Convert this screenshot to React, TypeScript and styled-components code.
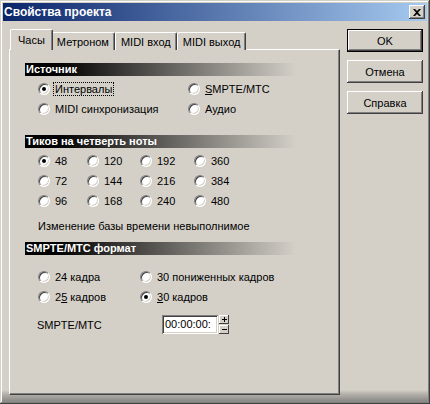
import styled, { createGlobalStyle } from "styled-components";

const GlobalStyle = createGlobalStyle`
  body {
    margin: 0;
    background: #d4d0c8;
    font-family: "Liberation Sans", Arial, sans-serif;
    font-size: 11px;
    color: #000;
  }
`;

const Window = styled.div`
  width: 430px;
  height: 404px;
  box-sizing: border-box;
  padding: 3px;
  display: flex;
  flex-direction: column;
  background: linear-gradient(
    to bottom,
    #d4d0c8 0,
    #d4d0c8 390px,
    #b4b1aa 394px,
    #8c8b88 401px
  );
  box-shadow: inset -1px -1px #404040, inset 1px 1px #d4d0c8,
    inset -2px -2px #808080, inset 2px 2px #fff;
`;

const TitleBar = styled.div`
  height: 18px;
  flex: none;
  display: flex;
  align-items: center;
  justify-content: space-between;
  padding: 0 2px 0 1px;
  background: linear-gradient(to right, #0a246a, #a6caf0);
`;

const Title = styled.span`
  color: #fff;
  font-weight: bold;
  font-size: 12px;
`;

const CloseButton = styled.div`
  width: 16px;
  height: 14px;
  box-sizing: border-box;
  background: #d4d0c8;
  display: flex;
  align-items: center;
  justify-content: center;
  box-shadow: inset -1px -1px #404040, inset 1px 1px #fff,
    inset -2px -2px #808080;
`;

const Body = styled.div`
  flex: 1;
  display: flex;
  gap: 7px;
  padding: 8px 0 6px 6px;
`;

const LeftColumn = styled.div`
  width: 331px;
  display: flex;
  flex-direction: column;
`;

const TabStrip = styled.div`
  display: flex;
  align-items: flex-end;
  height: 21px;
  padding-left: 3px;
  margin-bottom: -1px;
  position: relative;
  z-index: 1;
`;

const Tab = styled.div<{ $active?: boolean }>`
  height: ${(p) => (p.$active ? 21 : 18)}px;
  box-sizing: border-box;
  padding: ${(p) => (p.$active ? "3px 7px 0" : "2px 5px 0")};
  margin: ${(p) => (p.$active ? "0 -2px" : "0")};
  background: #d4d0c8;
  border-top: 1px solid #fff;
  border-left: 1px solid #fff;
  border-right: 1px solid #404040;
  border-top-left-radius: 2px;
  border-top-right-radius: 2px;
  box-shadow: inset -1px 0 #808080;
  position: relative;
  z-index: ${(p) => (p.$active ? 2 : 1)};
  white-space: nowrap;
  line-height: 14px;
`;

const Panel = styled.div`
  flex: 1;
  box-sizing: border-box;
  background: #d4d0c8;
  border: 1px solid;
  border-color: #fff #404040 #404040 #fff;
  box-shadow: inset -1px -1px #808080;
  padding: 13px 0 0 15px;
  display: flex;
  flex-direction: column;
`;

const SectionHeader = styled.div<{ $top: number }>`
  width: 270px;
  height: 13px;
  margin-top: ${(p) => p.$top}px;
  padding-left: 1px;
  color: #fff;
  font-weight: bold;
  font-size: 11px;
  line-height: 13px;
  background: linear-gradient(to right, #000 12%, #d4d0c8 100%);
`;

const RadioGrid = styled.div<{ $cols: string; $top: number }>`
  display: grid;
  grid-template-columns: ${(p) => p.$cols};
  grid-auto-rows: 20px;
  margin: ${(p) => p.$top}px 0 0 13px;
`;

const RadioLabel = styled.label`
  display: flex;
  align-items: center;
  gap: 5px;
  white-space: nowrap;
`;

const RadioCircle = styled.span<{ $checked?: boolean }>`
  width: 12px;
  height: 12px;
  box-sizing: border-box;
  border-radius: 50%;
  background: #fff;
  border: 1px solid;
  border-color: #808080 #fff #fff #808080;
  box-shadow: inset 1px 1px #404040, inset -1px -1px #d4d0c8;
  display: flex;
  align-items: center;
  justify-content: center;
  flex: none;

  &::after {
    content: "";
    width: 4px;
    height: 4px;
    border-radius: 50%;
    background: ${(p) => (p.$checked ? "#000" : "transparent")};
  }
`;

const Focus = styled.span`
  outline: 1px dotted #000;
  outline-offset: 0;
  padding: 0 1px;
  margin-left: -1px;
`;

const Note = styled.div`
  margin: 9px 0 0 13px;
  line-height: 13px;
`;

const SmpteRow = styled.div`
  display: flex;
  align-items: center;
  margin: 8px 0 0 12px;
`;

const SmpteLabel = styled.span`
  width: 125px;
`;

const TimeInput = styled.div`
  width: 56px;
  height: 19px;
  box-sizing: border-box;
  background: #fff;
  padding: 3px 0 0 3px;
  overflow: hidden;
  white-space: nowrap;
  line-height: 13px;
  box-shadow: inset 1px 1px #808080, inset -1px -1px #fff,
    inset 2px 2px #404040, inset -2px -2px #d4d0c8;
`;

const Spinner = styled.div`
  display: flex;
  flex-direction: column;
  gap: 1px;
  margin-left: 1px;
`;

const SpinButton = styled.div`
  width: 10px;
  height: 9px;
  box-sizing: border-box;
  display: flex;
  align-items: center;
  justify-content: center;
  background: #d4d0c8;
  box-shadow: inset -1px -1px #404040, inset 1px 1px #fff;
`;

const ButtonColumn = styled.div`
  display: flex;
  flex-direction: column;
  gap: 8px;
`;

const Button = styled.div<{ $default?: boolean }>`
  width: 76px;
  height: 23px;
  box-sizing: border-box;
  display: flex;
  align-items: center;
  justify-content: center;
  background: #d4d0c8;
  border: ${(p) => (p.$default ? "1px solid #000" : "none")};
  box-shadow: inset -1px -1px #404040, inset 1px 1px #fff,
    inset -2px -2px #808080, inset 2px 2px #d4d0c8;
`;

type RadioProps = { label: React.ReactNode; checked?: boolean };

const Radio = ({ label, checked }: RadioProps) => (
  <RadioLabel>
    <RadioCircle $checked={checked} />
    <span>{label}</span>
  </RadioLabel>
);

const ticks = ["48", "120", "192", "360", "72", "144", "216", "384", "96", "168", "240", "480"];

export default function App() {
  return (
    <>
      <GlobalStyle />
      <Window>
        <TitleBar>
          <Title>Свойства проекта</Title>
          <CloseButton>
            <svg width="8" height="7" viewBox="0 0 8 7">
              <path d="M0 0h2l2 2 2-2h2L5 3.5 8 7H6L4 5 2 7H0l3-3.5z" fill="#000" />
            </svg>
          </CloseButton>
        </TitleBar>
        <Body>
          <LeftColumn>
            <TabStrip>
              <Tab $active>Часы</Tab>
              <Tab>Метроном</Tab>
              <Tab>MIDI вход</Tab>
              <Tab>MIDI выход</Tab>
            </TabStrip>
            <Panel>
              <SectionHeader $top={0}>Источник</SectionHeader>
              <RadioGrid $cols="150px auto" $top={3}>
                <Radio checked label={<Focus>Интервалы</Focus>} />
                <Radio label={<><u>S</u>MPTE/MTC</>} />
                <Radio label="MIDI синхронизация" />
                <Radio label="Аудио" />
              </RadioGrid>

              <SectionHeader $top={16}>Тиков на четверть ноты</SectionHeader>
              <RadioGrid $cols="49px 53px 54px auto" $top={3}>
                {ticks.map((t) => (
                  <Radio key={t} label={t} checked={t === "48"} />
                ))}
              </RadioGrid>
              <Note>Изменение базы времени невыполнимое</Note>

              <SectionHeader $top={9}>SMPTE/MTC формат</SectionHeader>
              <RadioGrid $cols="102px auto" $top={12}>
                <Radio label="24 кадра" />
                <Radio label="30 пониженных кадров" />
                <Radio label={<>2<u>5</u> кадров</>} />
                <Radio checked label={<><u>3</u>0 кадров</>} />
              </RadioGrid>

              <SmpteRow>
                <SmpteLabel>SMPTE/MTC</SmpteLabel>
                <TimeInput>00:00:00:</TimeInput>
                <Spinner>
                  <SpinButton>
                    <svg width="5" height="5" viewBox="0 0 5 5">
                      <path d="M0 2h5v1H0zM2 0h1v5H2z" fill="#000" />
                    </svg>
                  </SpinButton>
                  <SpinButton>
                    <svg width="5" height="5" viewBox="0 0 5 5">
                      <path d="M0 2h5v1H0z" fill="#000" />
                    </svg>
                  </SpinButton>
                </Spinner>
              </SmpteRow>
            </Panel>
          </LeftColumn>
          <ButtonColumn>
            <Button $default>OK</Button>
            <Button>Отмена</Button>
            <Button>Справка</Button>
          </ButtonColumn>
        </Body>
      </Window>
    </>
  );
}
